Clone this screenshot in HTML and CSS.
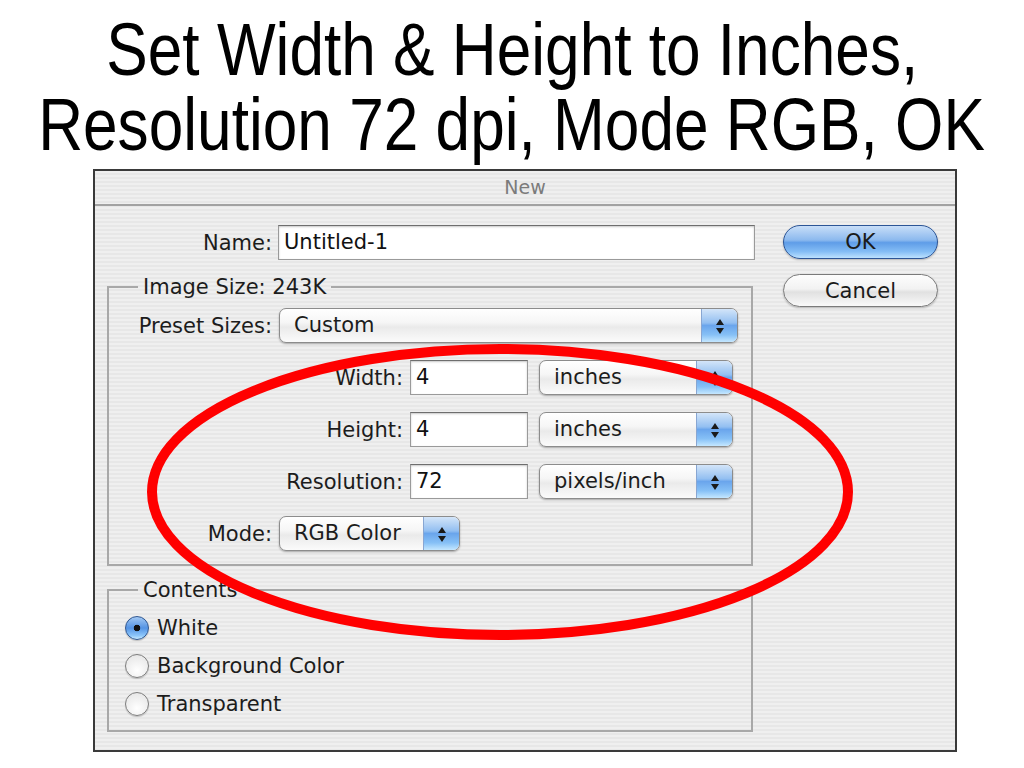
FILE: index.html
```html
<!DOCTYPE html>
<html lang="en">
<head>
<meta charset="utf-8">
<title>New</title>
<link rel="stylesheet" href="styles.css">
</head>
<body>
<main class="slide">
  <h1 class="slide-title">
    <span class="title-line">Set Width &amp; Height to Inches,</span>
    <span class="title-line">Resolution 72 dpi, Mode RGB, OK</span>
  </h1>

  <section class="dialog">
    <header class="dialog-titlebar">New</header>
    <div class="dialog-body">
      <div class="dialog-form">
        <div class="row">
          <span class="lbl lbl-main">Name:</span>
          <div class="field field-name">Untitled-1</div>
        </div>

        <fieldset class="group group-size">
          <legend>Image Size: 243K</legend>
          <div class="row">
            <span class="lbl lbl-inner">Preset Sizes:</span>
            <div class="popup popup-preset">
              <span class="popup-text">Custom</span>
              <span class="popup-arrows"><svg viewBox="0 0 10 20" width="10" height="20"><path d="M5 3 L9 9 H1 Z M1 12 H9 L5 18 Z" fill="#1a1a1a"/></svg></span>
            </div>
          </div>
          <div class="row">
            <span class="lbl lbl-dim">Width:</span>
            <div class="field field-num">4</div>
            <div class="popup popup-unit">
              <span class="popup-text">inches</span>
              <span class="popup-arrows"><svg viewBox="0 0 10 20" width="10" height="20"><path d="M5 3 L9 9 H1 Z M1 12 H9 L5 18 Z" fill="#1a1a1a"/></svg></span>
            </div>
          </div>
          <div class="row">
            <span class="lbl lbl-dim">Height:</span>
            <div class="field field-num">4</div>
            <div class="popup popup-unit">
              <span class="popup-text">inches</span>
              <span class="popup-arrows"><svg viewBox="0 0 10 20" width="10" height="20"><path d="M5 3 L9 9 H1 Z M1 12 H9 L5 18 Z" fill="#1a1a1a"/></svg></span>
            </div>
          </div>
          <div class="row">
            <span class="lbl lbl-dim">Resolution:</span>
            <div class="field field-num">72</div>
            <div class="popup popup-unit">
              <span class="popup-text">pixels/inch</span>
              <span class="popup-arrows"><svg viewBox="0 0 10 20" width="10" height="20"><path d="M5 3 L9 9 H1 Z M1 12 H9 L5 18 Z" fill="#1a1a1a"/></svg></span>
            </div>
          </div>
          <div class="row">
            <span class="lbl lbl-inner">Mode:</span>
            <div class="popup popup-mode">
              <span class="popup-text">RGB Color</span>
              <span class="popup-arrows"><svg viewBox="0 0 10 20" width="10" height="20"><path d="M5 3 L9 9 H1 Z M1 12 H9 L5 18 Z" fill="#1a1a1a"/></svg></span>
            </div>
          </div>
        </fieldset>

        <fieldset class="group group-contents">
          <legend>Contents</legend>
          <div class="radio-row"><span class="radio radio-on"></span><span>White</span></div>
          <div class="radio-row"><span class="radio"></span><span>Background Color</span></div>
          <div class="radio-row"><span class="radio"></span><span>Transparent</span></div>
        </fieldset>
      </div>

      <div class="dialog-buttons">
        <button class="btn btn-default" type="button">OK</button>
        <button class="btn btn-cancel" type="button">Cancel</button>
      </div>
    </div>
  </section>

  <svg class="annotation" viewBox="0 0 1024 768" width="1024" height="768" aria-hidden="true">
    <ellipse cx="500" cy="480" rx="348" ry="143" fill="none" stroke="#ff0000" stroke-width="10"/>
  </svg>
</main>
</body>
</html>
```

FILE: styles.css
```css
html, body {
  margin: 0;
  padding: 0;
  background: #ffffff;
  overflow: hidden;
}

.slide {
  position: relative;
  width: 1024px;
  height: 768px;
}

.slide-title {
  margin: 12px 0 0;
  display: flex;
  flex-direction: column;
  align-items: center;
  font: 400 74px/75px "Liberation Sans", Arial, sans-serif;
  color: #000000;
  white-space: nowrap;
}

.title-line {
  display: block;
  transform: scaleX(0.84);
}

.dialog {
  margin: 7px 0 0 93px;
  width: 864px;
  height: 583px;
  box-sizing: border-box;
  border: 2px solid #3a3a3a;
  background: repeating-linear-gradient(to bottom, #efefef 0 2px, #e7e7e7 2px 4px);
  font-family: "DejaVu Sans", sans-serif;
  font-size: 21px;
  color: #1c1c1c;
}

.dialog-titlebar {
  height: 33px;
  line-height: 33px;
  text-align: center;
  font-size: 19px;
  color: #7b7b7b;
  border-bottom: 2px solid #a2a2a2;
}

.dialog-body {
  display: flex;
  gap: 28px;
  padding: 19px 17px 0 12px;
}

.dialog-form {
  width: 648px;
  flex: none;
}

.row {
  display: flex;
  align-items: center;
  height: 35px;
}

.lbl {
  flex: none;
  text-align: right;
  white-space: nowrap;
}

.lbl-main {
  width: 165px;
  margin-right: 6px;
}

.lbl-inner {
  width: 163px;
  margin-right: 7px;
}

.lbl-dim {
  width: 294px;
  margin-right: 7px;
}

.field {
  flex: none;
  box-sizing: border-box;
  height: 35px;
  padding: 0 5px;
  line-height: 33px;
  background: #ffffff;
  border: 1px solid #9a9a9a;
  border-top-color: #6e6e6e;
  box-shadow: inset 0 1px 2px rgba(0, 0, 0, 0.22);
  color: #111111;
}

.field-name {
  width: 477px;
}

.field-num {
  width: 118px;
  margin-right: 11px;
}

.group {
  box-sizing: border-box;
  width: 646px;
  min-width: 0;
  margin: 0;
  border: 2px solid #a8a8a8;
}

.group legend {
  margin-left: 29px;
  padding: 0 5px;
  line-height: 24px;
}

.group-size {
  margin-top: 15px;
  padding: 9px 0 13px;
}

.group-size .row + .row {
  margin-top: 17px;
}

.group-contents {
  margin-top: 12px;
  padding: 7px 0 7px;
}

.popup {
  flex: none;
  box-sizing: border-box;
  height: 35px;
  display: flex;
  align-items: stretch;
  border: 1px solid #8c8c8c;
  border-radius: 7px;
  background: linear-gradient(#ffffff, #f6f6f6 40%, #eaeaea 55%, #fbfbfb);
  box-shadow: 0 1px 2px rgba(0, 0, 0, 0.3);
  overflow: hidden;
}

.popup-preset {
  width: 459px;
}

.popup-unit {
  width: 194px;
}

.popup-mode {
  width: 181px;
}

.popup-text {
  flex: 1;
  padding-left: 14px;
  line-height: 33px;
  white-space: nowrap;
}

.popup-arrows {
  flex: none;
  width: 35px;
  display: flex;
  align-items: center;
  justify-content: center;
  background: linear-gradient(#d3e5f9, #93bff1 42%, #6aa5ec 50%, #86c0f6 78%, #c4e7ff);
  border-left: 1px solid #88a6d2;
}

.dialog-buttons {
  display: flex;
  flex-direction: column;
  gap: 15px;
  width: 155px;
  flex: none;
}

.btn {
  font: inherit;
  color: #1a1a1a;
  height: 34px;
  padding: 0;
  border-radius: 17px;
  border: 1px solid #7a7a7a;
  background: linear-gradient(#fdfdfd, #f2f2f2 45%, #e1e1e1 55%, #f9f9f9);
  box-shadow: 0 1px 2px rgba(0, 0, 0, 0.25);
}

.btn-default {
  border-color: #2c5596;
  background: linear-gradient(#c8def8, #8cb9ee 44%, #5f9de8 52%, #84bdf5 80%, #bde2ff);
}

.btn-cancel {
  height: 33px;
}

.radio-row {
  display: flex;
  align-items: center;
  gap: 8px;
  height: 38px;
  padding-left: 16px;
}

.radio {
  flex: none;
  width: 24px;
  height: 24px;
  box-sizing: border-box;
  border-radius: 50%;
  border: 1px solid #7d7d7d;
  background: radial-gradient(circle at 50% 70%, #ffffff, #e2e2e2);
  box-shadow: 0 1px 1px rgba(0, 0, 0, 0.2);
}

.radio-on {
  border-color: #2f5690;
  background:
    radial-gradient(circle, #111111 0 3px, transparent 3.6px),
    linear-gradient(#a2c8f3, #5493e4 50%, #8dc7fb 85%, #c8eaff);
}

.annotation {
  position: absolute;
  left: 0;
  top: 0;
  pointer-events: none;
}
```
